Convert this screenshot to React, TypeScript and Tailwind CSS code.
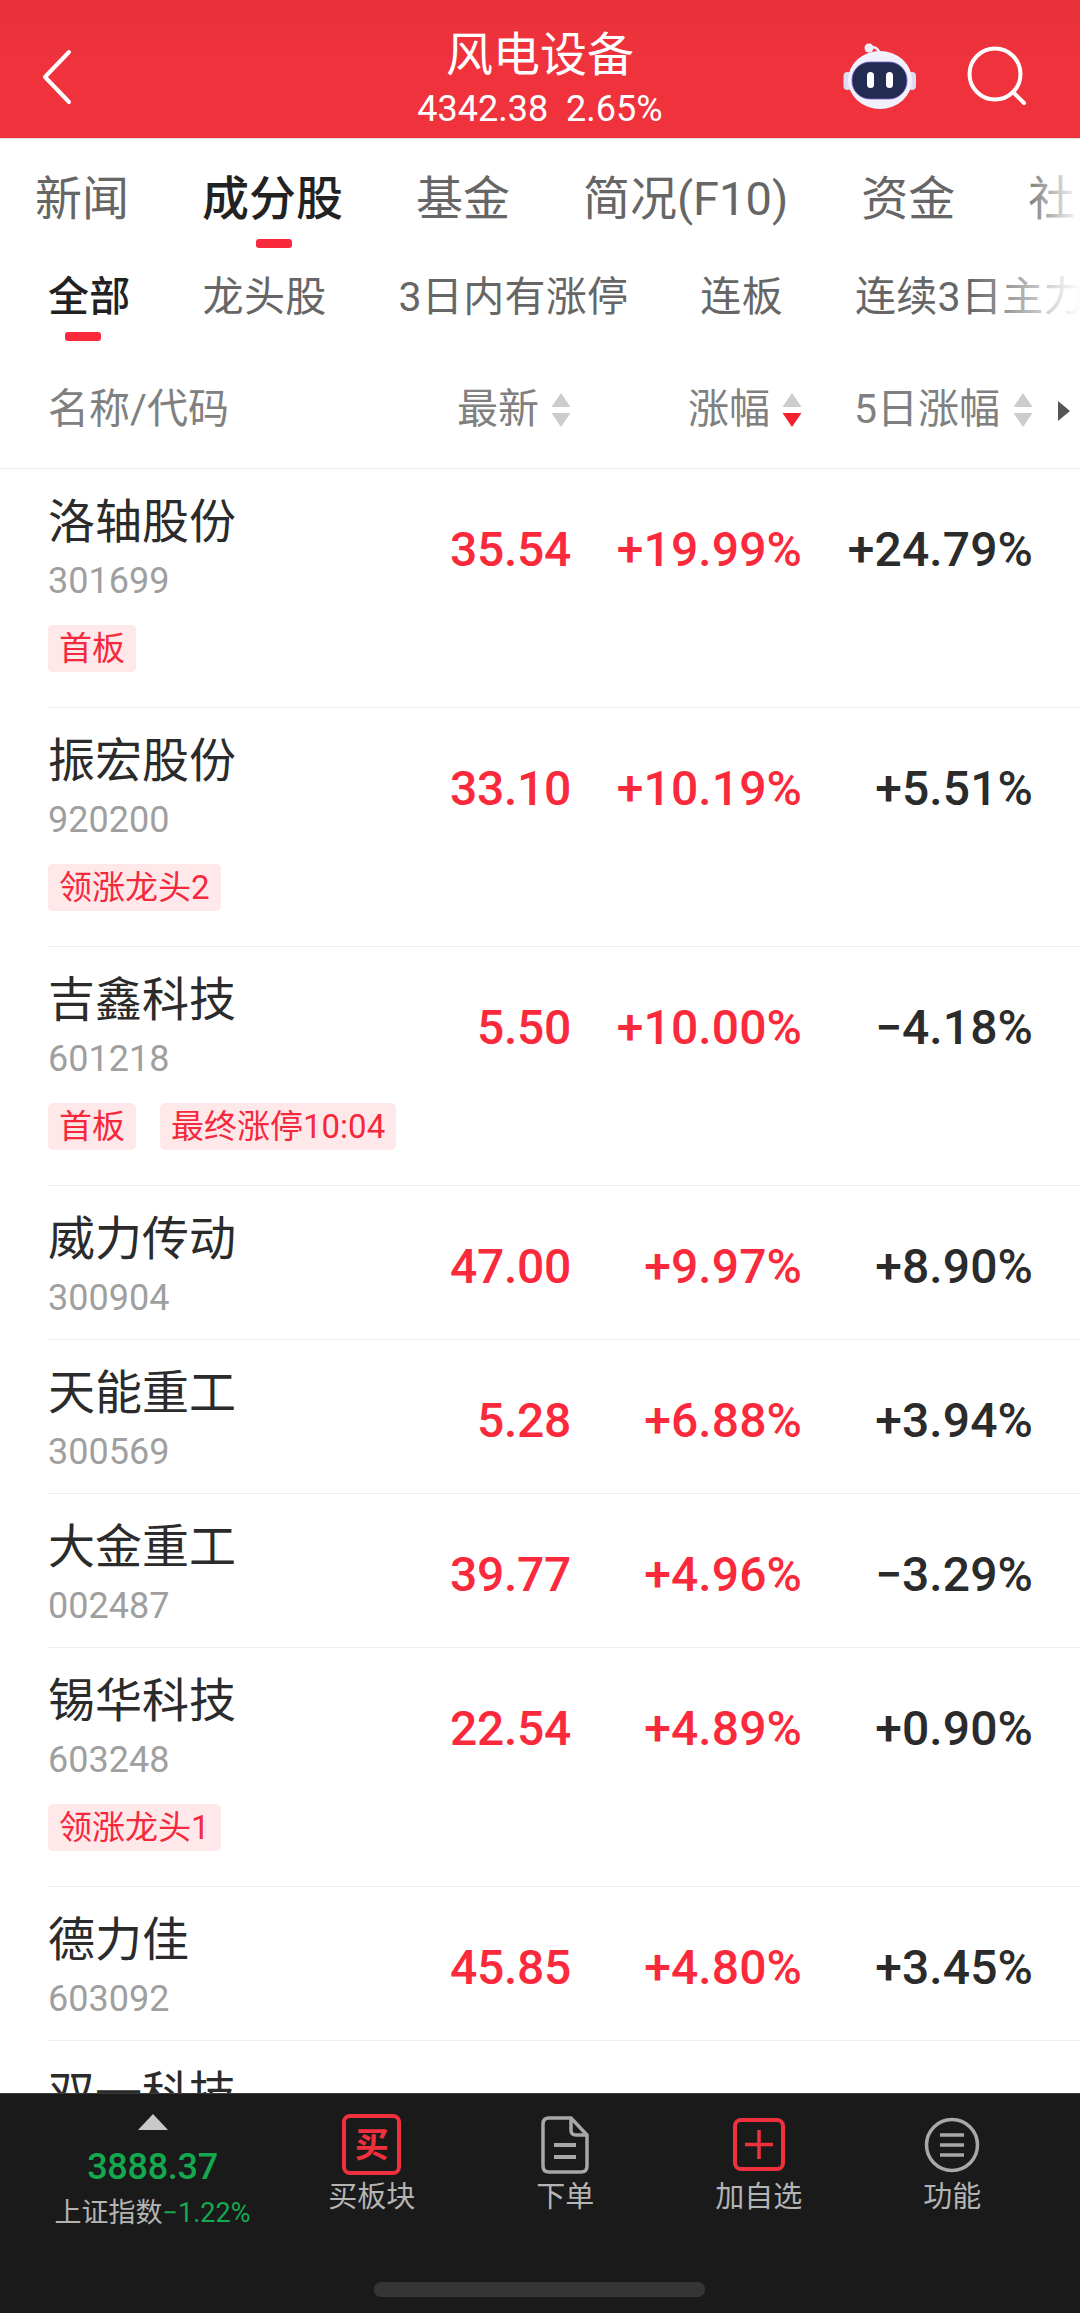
import React from "react";

const FONT = 'Roboto, "Noto Sans CJK SC", sans-serif';

type Row = { name: string; code: string; price: string; pct: string; five: string; tags?: string[] };
const rows: Row[] = [
  { name: "洛轴股份", code: "301699", price: "35.54", pct: "+19.99%", five: "+24.79%", tags: ["首板"] },
  { name: "振宏股份", code: "920200", price: "33.10", pct: "+10.19%", five: "+5.51%", tags: ["领涨龙头2"] },
  { name: "吉鑫科技", code: "601218", price: "5.50", pct: "+10.00%", five: "−4.18%", tags: ["首板", "最终涨停10:04"] },
  { name: "威力传动", code: "300904", price: "47.00", pct: "+9.97%", five: "+8.90%" },
  { name: "天能重工", code: "300569", price: "5.28", pct: "+6.88%", five: "+3.94%" },
  { name: "大金重工", code: "002487", price: "39.77", pct: "+4.96%", five: "−3.29%" },
  { name: "锡华科技", code: "603248", price: "22.54", pct: "+4.89%", five: "+0.90%", tags: ["领涨龙头1"] },
  { name: "德力佳", code: "603092", price: "45.85", pct: "+4.80%", five: "+3.45%" },
  { name: "双一科技", code: "300041", price: "", pct: "", five: "" },
];

function SortArrows({ active }: { active?: boolean }) {
  return (
    <svg width="20" height="36" viewBox="0 0 20 36" className="shrink-0">
      <path d="M10 1 L19.5 15 H0.5 Z" fill="#cccccc" />
      <path d="M0.5 21 H19.5 L10 35 Z" fill={active ? "#f5222d" : "#cccccc"} />
    </svg>
  );
}

function Tag({ text }: { text: string }) {
  return (
    <span className="h-[47px] px-[11px] rounded-[5px] bg-[#ffe8ea] text-[#f5283c] text-[33px] leading-[47px] whitespace-nowrap">
      {text}
    </span>
  );
}

function StockRow({ r }: { r: Row }) {
  return (
    <div className="ml-[48px] border-b border-[#efefef]">
      <div className="grid grid-cols-[1fr_231px_231px_231px] h-[154px] items-center pr-[47px] -mb-[1px]">
        <div className="pt-[3px]">
          <div className="text-[47px] leading-[60px] text-[#2b2b2b]">{r.name}</div>
          <div className="text-[36px] leading-[44px] mt-[7px] text-[#9f9f9f]">{r.code}</div>
        </div>
        <div className="pt-[8px] text-right text-[48px] font-medium tracking-[-0.3px] text-[#fa2a3c]">{r.price}</div>
        <div className="pt-[8px] text-right text-[48px] font-medium tracking-[0.1px] text-[#fa2a3c]">{r.pct}</div>
        <div className="pt-[8px] text-right text-[48px] font-medium tracking-[0.1px] text-[#2b2b2b]">{r.five}</div>
      </div>
      {r.tags && (
        <div className="flex gap-[24px] pt-[3px] pb-[35px]">
          {r.tags.map((t) => (
            <Tag key={t} text={t} />
          ))}
        </div>
      )}
    </div>
  );
}

function Robot() {
  return (
    <svg width="74" height="68" viewBox="0 0 74 68">
      <path d="M27 6 C32 4 36 7 37 13" fill="none" stroke="#eef" strokeWidth="2.5" />
      <circle cx="26" cy="6" r="4.5" fill="#f3f0fb" />
      <rect x="0.5" y="30" width="8" height="18" rx="4" fill="#dcdcf5" />
      <rect x="65" y="30" width="8" height="18" rx="4" fill="#dcdcf5" />
      <ellipse cx="37" cy="38" rx="32" ry="29" fill="#f1f0fb" />
      <rect x="9" y="20" width="55" height="37" rx="18" fill="#222c50" stroke="#7a5bd0" strokeWidth="0.8" />
      <rect x="24" y="30" width="7" height="16" rx="3.5" fill="#ffffff" />
      <rect x="43" y="30" width="7" height="16" rx="3.5" fill="#ffffff" />
    </svg>
  );
}

function FooterItem({ icon, label }: { icon: React.ReactNode; label: string }) {
  return (
    <div className="w-[193.5px] flex flex-col items-center">
      <div className="h-[69px] flex items-center justify-center">{icon}</div>
      <div className="text-[29px] leading-[38px] -mt-[1px] text-[#b4b4b4]">{label}</div>
    </div>
  );
}

export default function App() {
  return (
    <div className="w-[1080px] h-[2313px] flex flex-col overflow-hidden bg-white" style={{ fontFamily: FONT }}>
      {/* Header */}
      <div className="h-[139px] shrink-0 grid grid-cols-[1fr_auto_1fr] items-center bg-gradient-to-b from-[#e9323a] via-[#f0323c] to-[#f0323c] border-b border-[#e8dcdc]">
        <div className="pl-[40px] pt-[16px]">
          <svg width="34" height="56" viewBox="0 0 34 56">
            <path d="M29 3 L5 28 L29 53" fill="none" stroke="#ffffff" strokeWidth="4" strokeLinecap="round" strokeLinejoin="round" />
          </svg>
        </div>
        <div className="text-center text-white pt-[15px]">
          <div className="text-[47px] leading-[60px]">风电设备</div>
          <div className="text-[36px] leading-[40px] mt-[4px] whitespace-pre">4342.38  2.65%</div>
        </div>
        <div className="flex justify-end items-center gap-[50px] pr-[53px] pt-[14px]">
          <Robot />
          <svg width="60" height="60" viewBox="0 0 60 60">
            <circle cx="28" cy="28" r="25.5" fill="none" stroke="#ffffff" strokeWidth="4" />
            <path d="M47 47 L57 57" stroke="#ffffff" strokeWidth="4" strokeLinecap="round" />
          </svg>
        </div>
      </div>

      {/* Primary tabs */}
      <div className="relative h-[112px] shrink-0 flex items-start gap-[73px] pl-[35px] pt-[30px] overflow-hidden text-[47px] leading-[60px] text-[#666666] whitespace-nowrap">
        <div>新闻</div>
        <div className="relative font-medium text-[#222222]">
          成分股
          <div className="absolute left-[54px] top-[70px] w-[36px] h-[9px] rounded-[3px] bg-[#fa2a3c]" />
        </div>
        <div>基金</div>
        <div>简况(F10)</div>
        <div>资金</div>
        <div>社区</div>
        <div className="absolute right-0 top-0 bottom-0 w-[60px] bg-gradient-to-r from-white/0 to-white" />
      </div>

      {/* Secondary tabs */}
      <div className="relative h-[104px] shrink-0 flex items-start gap-[72px] pl-[48px] pt-[18px] overflow-hidden text-[41px] tracking-[0.3px] leading-[56px] text-[#666666] whitespace-nowrap">
        <div className="relative font-medium text-[#222222]">
          全部
          <div className="absolute left-[17px] top-[63px] w-[36px] h-[9px] rounded-[3px] bg-[#fa2a3c]" />
        </div>
        <div>龙头股</div>
        <div>3日内有涨停</div>
        <div>连板</div>
        <div>连续3日主力净流入</div>
        <div className="absolute right-0 top-0 bottom-0 w-[110px] bg-gradient-to-r from-white/0 to-white" />
      </div>

      {/* Table head */}
      <div className="h-[114px] shrink-0 relative grid grid-cols-[1fr_231px_231px_231px] items-center pl-[48px] pr-[47px] pb-[4px] border-b border-[#ececec] text-[41px] text-[#808080]">
        <div>名称/代码</div>
        <div className="flex justify-end items-center gap-[12px]">
          <span>最新</span>
          <SortArrows />
        </div>
        <div className="flex justify-end items-center gap-[12px]">
          <span>涨幅</span>
          <SortArrows active />
        </div>
        <div className="flex justify-end items-center gap-[13px] whitespace-nowrap">
          <span>5日涨幅</span>
          <SortArrows />
        </div>
        <svg width="14" height="20" viewBox="0 0 14 20" className="absolute left-[1057px] top-[46px]">
          <path d="M1 0 L13 10 L1 20 Z" fill="#555555" />
        </svg>
      </div>

      {/* List */}
      <div className="flex-1 overflow-hidden">
        {rows.map((r) => (
          <StockRow key={r.code} r={r} />
        ))}
      </div>

      {/* Footer */}
      <div className="h-[220px] shrink-0 relative bg-[#1a1a1a] border-t border-[#3a3a3a]">
        <div className="flex pt-[16px] pr-[31px]">
          <div className="w-[275px] pl-[30px] pt-[4px] flex flex-col items-center">
            <svg width="30" height="16" viewBox="0 0 30 16">
              <path d="M15 0 L30 16 H0 Z" fill="#c8c8c8" />
            </svg>
            <div className="text-[36px] leading-[44px] mt-[15px] font-medium tracking-[-0.3px] text-[#14a84f]">3888.37</div>
            <div className="text-[27px] leading-[36px] mt-[6px] text-[#b4b4b4] whitespace-nowrap">
              上证指数<span className="text-[#14a84f]">−1.22%</span>
            </div>
          </div>
          <FooterItem
            label="买板块"
            icon={
              <div className="w-[59px] h-[61px] rounded-[8px] border-[4px] border-[#f0303c] flex items-center justify-center text-[34px] leading-none font-bold text-[#f0303c]">
                买
              </div>
            }
          />
          <FooterItem
            label="下单"
            icon={
              <svg width="50" height="58" viewBox="0 0 50 58">
                <path d="M9 2 H31 L47 19 V50 Q47 56 41 56 H9 Q3 56 3 50 V8 Q3 2 9 2 Z" fill="none" stroke="#a8a8a8" strokeWidth="3.5" />
                <path d="M31 2 V14 Q31 19 36 19 H47" fill="none" stroke="#a8a8a8" strokeWidth="3.5" />
                <path d="M14 29 H36 M14 41 H36" stroke="#a8a8a8" strokeWidth="4" />
              </svg>
            }
          />
          <FooterItem
            label="加自选"
            icon={
              <svg width="52" height="53" viewBox="0 0 52 53">
                <rect x="2" y="2" width="48" height="49" rx="6" fill="none" stroke="#f0303c" strokeWidth="4" />
                <path d="M26 12 V41 M12 26.5 H40" stroke="#f0303c" strokeWidth="3.5" />
              </svg>
            }
          />
          <FooterItem
            label="功能"
            icon={
              <svg width="56" height="56" viewBox="0 0 56 56">
                <circle cx="28" cy="28" r="25.5" fill="none" stroke="#a8a8a8" strokeWidth="3.5" />
                <path d="M16 18 H40 M16 28 H40 M16 38 H40" stroke="#a8a8a8" strokeWidth="3.5" />
              </svg>
            }
          />
        </div>
        <div className="absolute left-[374px] top-[188px] w-[331px] h-[15px] rounded-[7px] bg-[#353535]" />
      </div>
    </div>
  );
}
